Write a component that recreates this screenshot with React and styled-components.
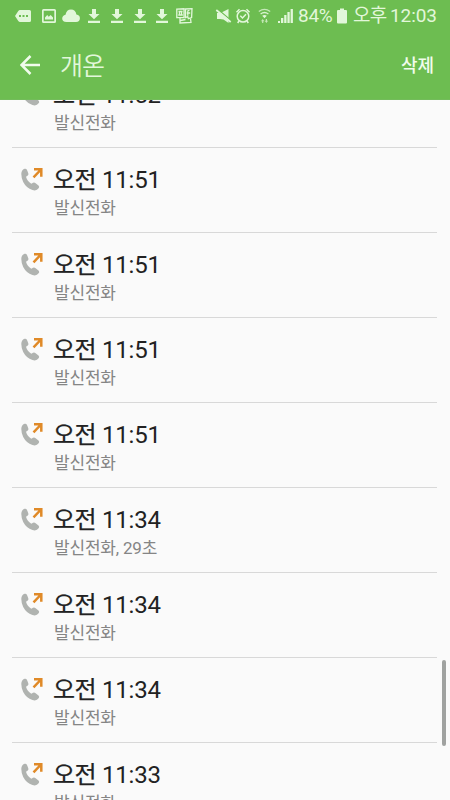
import React from 'react'
import styled, { createGlobalStyle } from 'styled-components'

const GlobalStyle = createGlobalStyle`
  * {
    box-sizing: border-box;
  }

  body {
    margin: 0;
    overflow: hidden;
    font-family: Roboto, 'Noto Sans CJK KR', sans-serif;
  }
`

const Screen = styled.div`
  width: 450px;
  height: 800px;
  display: flex;
  flex-direction: column;
  overflow: hidden;
  background-color: #fafafa;
`

const Top = styled.header`
  flex: none;
  height: 100px;
  background-color: #6dbd51;
  border-bottom: 1px solid #73bc5b;
  color: #e2f7da;
`

const StatusBar = styled.div`
  height: 31px;
  padding: 0 13px 0 15px;
  display: flex;
  align-items: center;
  justify-content: space-between;
`

const Group = styled.div`
  display: flex;
  align-items: center;
`

const Icon = styled.svg`
  flex: none;
  display: block;
  width: ${props => props.$w}px;
  height: 16px;
  margin-right: ${props => props.$gap || 0}px;
  overflow: visible;
  fill: #e2f7da;
`

const StatusText = styled.span`
  font-size: 19px;
  line-height: 30px;
  white-space: nowrap;
  width: ${props => props.$w}px;
  margin-right: ${props => props.$gap || 0}px;
  letter-spacing: ${props => props.$spacing || 0}px;
`

const TitleBar = styled.div`
  height: 69px;
  padding: 0 16px 0 20px;
  display: flex;
  align-items: center;
`

const BackIcon = styled.svg`
  display: block;
  width: 21px;
  height: 20px;
  margin-bottom: 2px;
  fill: none;
  stroke: #f1fcec;
  stroke-width: 2.5;
`

const Title = styled.h1`
  flex: 1;
  margin: 2px 0 0 19px;
  font-size: 25px;
  font-weight: 350;
  line-height: 36px;
  letter-spacing: -1px;
`

const Delete = styled.button`
  padding: 0;
  border: 0;
  background: none;
  color: #f1fcec;
  font-family: inherit;
  font-size: 18px;
  font-weight: 500;
  line-height: 26px;
`

const Body = styled.main`
  position: relative;
  flex: 1;
  min-height: 0;
  overflow: hidden;
`

const List = styled.ul`
  list-style: none;
  margin: -37px 13px 0 12px;
  padding: 0;
`

const Call = styled.li`
  height: 85px;
  padding: 17px 0 0 8px;
  display: flex;
  align-items: flex-start;
  border-bottom: 1px solid #d8d8d8;
`

const CallIcon = styled.svg`
  flex: none;
  display: block;
  width: 23px;
  height: 25px;
  margin: 2px 10px 0 0;
`

const Time = styled.div`
  height: 30px;
  display: flex;
  font-size: 24px;
  line-height: 30px;
  color: #222;
`

const Meridiem = styled.span`
  width: 49px;
  letter-spacing: -0.5px;
  -webkit-text-stroke: 0.25px #222;
`

const Digits = styled.span`
  letter-spacing: -0.2px;
`

const Kind = styled.div`
  padding: 1px 0 0 1px;
  font-size: 17px;
  line-height: 24px;
  letter-spacing: -0.2px;
  color: #858585;
`

const Scrollbar = styled.div`
  position: absolute;
  top: 560px;
  right: 4px;
  width: 4px;
  height: 86px;
  border-radius: 2px;
  background-color: #a0a2a0;
`

const Download = ({ gap }) => (
  <Icon $w={12} $gap={gap} viewBox='0 0 12 16'>
    <path d='M4 1h4v5h3.500L6 11.300.5 6H4zM0 12.800h12V15H0z' />
  </Icon>
)

const StatusIcons = () => (
  <Group>
    <Icon $w={16} $gap={11} viewBox='0 0 16 16'>
      <path
        fillRule='evenodd'
        d='M5 2h9.500Q16 2 16 3.500v9Q16 14 14.500 14H5Q4 14 3.300 13L0 8l3.300-5Q4 2 5 2zM4 7v2h2V7zm3.500 0v2h2V7zm3.500 0v2h2V7z'
      />
    </Icon>
    <Icon $w={14} $gap={6} viewBox='0 0 14 16'>
      <path
        fillRule='evenodd'
        d='M1.500 1h11Q14 1 14 2.500v11Q14 15 12.500 15h-11Q0 15 0 13.500v-11Q0 1 1.500 1zM1.700 2.700v10.600h10.600V2.700z'
      />
      <path d='M3 11.500V9.500l2.200-2.500 1.500 1.700L8.700 7 11 9.500v2z' />
    </Icon>
    <Icon $w={18} $gap={8} viewBox='0 0 18 16'>
      <path d='M4.500 14Q0 14 .2 10.300.5 7.200 3.500 6.700 4.500 1.500 9 1.500q4.500 0 5.400 5 3.500.5 3.500 3.800Q17.900 14 14 14z' />
    </Icon>
    <Download gap={10.500} />
    <Download gap={11} />
    <Download gap={10.500} />
    <Download gap={8} />
    <Icon $w={17} viewBox='0 0 17 16'>
      <g fill='none' stroke='#e2f7da' strokeWidth='1.300'>
        <path d='M.8 1.200 8 .8v8.700l-7.200.2zM9.500 1l6.500-.4-.4 9-3.200 1-.7-2-2.200 1z' />
        <path d='M4 10v5l11-.5-.5-4M4.500 12.500l5-1' />
        <path d='M2.500 3.500h4M3.500 3.500v3.200M5.500 3.500v3.200M2.300 7h4.500M13.500 2.300q-1.700-.2-1.700 1.500v4M10.700 5h3.500' />
      </g>
    </Icon>
  </Group>
)

const SystemIcons = () => (
  <Group>
    <Icon $w={15} $gap={5} viewBox='0 0 15 16'>
      <path d='M1 5h3.500L12.500 1v14L7.500 11.500 4 11H1z' />
      <path d='M2 1.500 16 13.300' stroke='#6dbd51' strokeWidth='1.300' />
      <path d='M.3 2 14.700 14' stroke='#e2f7da' strokeWidth='1.800' />
    </Icon>
    <Icon $w={14} $gap={8} viewBox='0 0 14 16'>
      <g fill='none' stroke='#e2f7da' strokeWidth='1.500'>
        <circle cx='7' cy='8.300' r='5.800' />
        <path d='M4.300 7.800 6.500 10l3.500-3.700M.5 4.300 3.500 1.300M13.500 4.300 10.500 1.300M3 13l-1.300 2M11 13l1.300 2' />
      </g>
    </Icon>
    <Icon $w={13} $gap={7} viewBox='0 0 13 16'>
      <g fill='none' stroke='#e2f7da' strokeWidth='1.300'>
        <path d='M.8 3.500Q6.500-.8 12.200 3.500' opacity='.75' />
        <path d='M2.600 6q3.900-3 7.800 0' opacity='.9' />
      </g>
      <path d='M4.200 7.700q2.300-1.600 4.600 0L6.500 10.300z' />
      <path d='M3 13.200 4.700 11l1.700 2.200H5.300V15H4.100v-1.800zM6.700 12.800h1.100V11H9v1.800h1.100L8.400 15z' opacity='.75' />
    </Icon>
    <Icon $w={15} $gap={5} viewBox='0 0 15 16'>
      <path d='M0 13h2v2H0zM3 10h2.300v5H3zM6.200 7h2.300v8H6.200zM9.400 4h2.300v11H9.400zM12.600 1h2.300v14h-2.300z' />
    </Icon>
    <StatusText $w={35} $gap={4} $spacing={-0.3}>84%</StatusText>
    <Icon $w={10} $gap={6} viewBox='0 0 10 16'>
      <path d='M3 .5h4V2h2q1 0 1 1v11.500q0 1-1 1H1q-1 0-1-1V3q0-1 1-1h2z' />
    </Icon>
    <StatusText $w={37} $spacing={-0.8}>오후</StatusText>
    <StatusText $w={47} $spacing={-0.1}>12:03</StatusText>
  </Group>
)

const calls = [
  { time: '11:52' },
  { time: '11:51' },
  { time: '11:51' },
  { time: '11:51' },
  { time: '11:51' },
  { time: '11:34', duration: '29초' },
  { time: '11:34' },
  { time: '11:34' },
  { time: '11:33' }
]

const CallRow = ({ time, duration }) => (
  <Call>
    <CallIcon viewBox='0 0 23 25'>
      <path
        fill='#b0b3b0'
        d='M4.500 1.800Q6.200 1.200 7 3l1.300 3.300q.5 1.500-.8 2.500L6 9.800q1.200 4.400 5.300 6.900l1.700-1q1.200-.7 2.300.2l3.200 2.700q1.200 1.100.3 2.500-2.300 3.400-6.300 2Q6.300 21 3.200 15 1.300 11 1.300 7 1.300 3 4.500 1.800z'
      />
      <path
        fill='none'
        stroke='#e08a28'
        strokeWidth='2.500'
        d='M14 2.300h7.300v7.500M21 2.500l-7.500 7.800'
      />
    </CallIcon>
    <div>
      <Time>
        <Meridiem>오전</Meridiem>
        <Digits>{time}</Digits>
      </Time>
      <Kind>발신전화{duration && `, ${duration}`}</Kind>
    </div>
  </Call>
)

const App = () => {
  return (
    <Screen>
      <GlobalStyle />
      <Top>
        <StatusBar>
          <StatusIcons />
          <SystemIcons />
        </StatusBar>
        <TitleBar>
          <BackIcon viewBox='0 0 21 20'>
            <path d='M20 10H2M10.500 1 1.500 10l9 9' />
          </BackIcon>
          <Title>개온</Title>
          <Delete>삭제</Delete>
        </TitleBar>
      </Top>

      <Body>
        <List>
          {calls.map((call, i) => (
            <CallRow key={i} {...call} />
          ))}
        </List>
        <Scrollbar />
      </Body>
    </Screen>
  )
}

export default App
